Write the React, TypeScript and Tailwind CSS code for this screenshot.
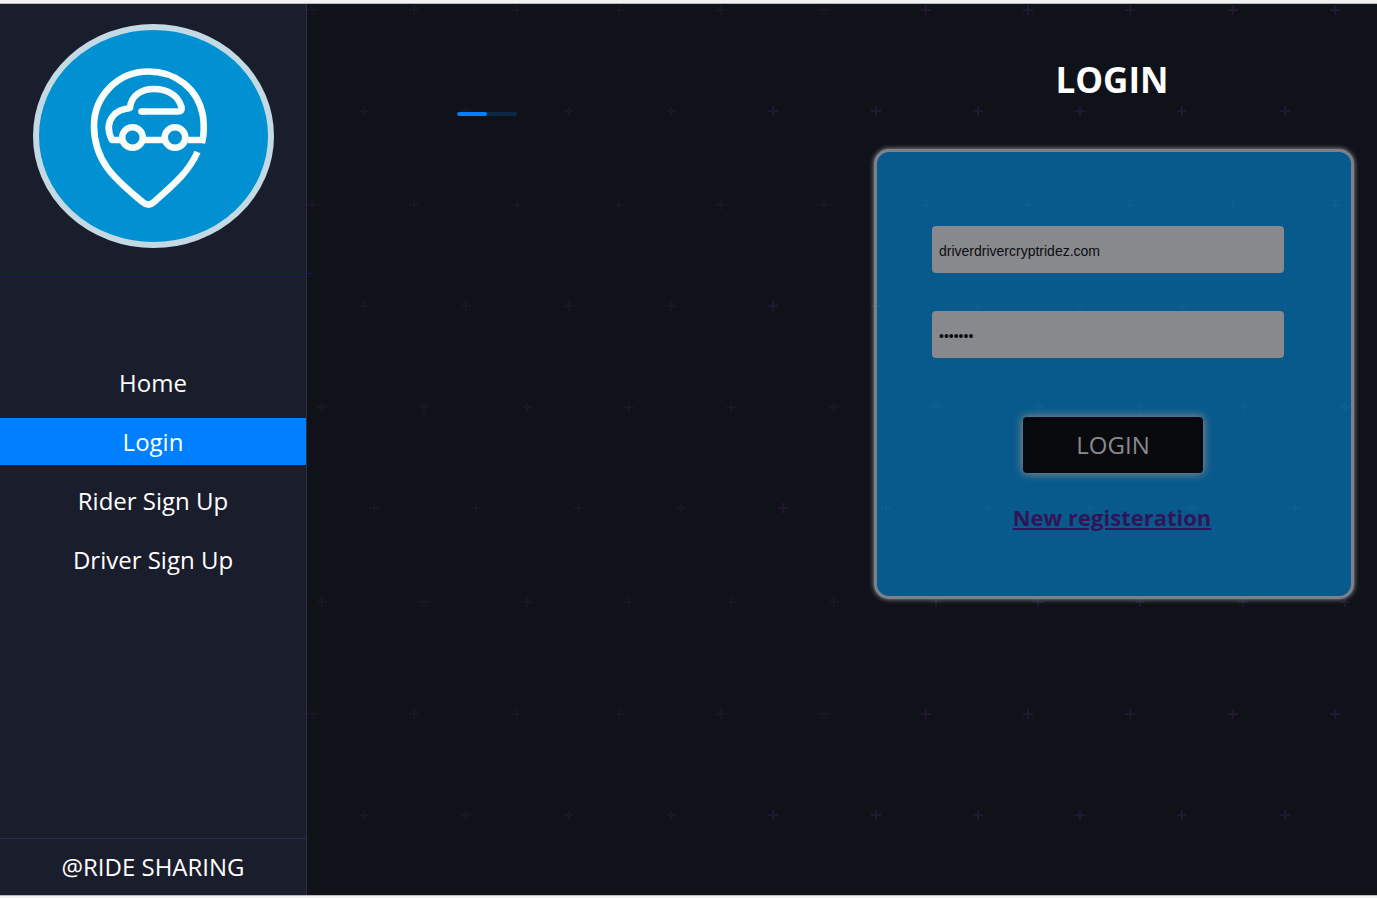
const PURPLE = "#20182e";
const NAVY = "#1a1c30";
const DIM_PURPLE = "#181622";
const DIM_NAVY = "#151824";

const rows = [
  { y: 9, start: 312 },
  { y: 110, start: 364 },
  { y: 204, start: 312 },
  { y: 305, start: 364 },
  { y: 406, start: 322 },
  { y: 507, start: 374 },
  { y: 601, start: 322 },
  { y: 713, start: 312 },
  { y: 814, start: 364 },
];

function Crosses() {
  return (
    <svg className="pointer-events-none absolute inset-0 h-full w-full" aria-hidden="true">
      {rows.map((row) =>
        Array.from({ length: 11 }, (_, i) => {
          const x = Math.round(row.start - 307 + i * 102.3);
          const y = row.y - 4;
          const staggered = row.start >= 350;
          const bright = i >= (staggered ? 4 : 6);
          const navy = i % 3 === (staggered ? 2 : 1);
          const color = bright ? (navy ? NAVY : PURPLE) : navy ? DIM_NAVY : DIM_PURPLE;
          return (
            <path
              key={`${row.y}-${i}`}
              d={`M${x - 5} ${y + 1}h10M${x} ${y - 4}v10`}
              stroke={color}
              strokeWidth="2"
            />
          );
        })
      )}
    </svg>
  );
}

function Logo() {
  return (
    <svg
      viewBox="0 0 241 224"
      className="h-56 w-[241px]"
      role="img"
      aria-label="Ride sharing logo"
      fill="none"
    >
      <ellipse cx="120.5" cy="112" rx="117.5" ry="109" fill="#0191d2" stroke="#c3d9e3" strokeWidth="6" />
      <g stroke="#f8fcfa" strokeWidth="6.6">
        <path d="M169 119C171 111 171 100 170 92C165 64 142 47.5 115.500 47.5C84 47.5 61 73 61 102C61 140 86 158 109.500 178Q115.500 183 121 178C140 161 155 149 164.500 128" />
        <path d="M87 116H79C74 106 75 98 80 92C84 87 89 85 97 84C98 71 109 65 121 65C134 65 145 71 148.500 83Q149.500 87.500 145 87.500H108.500" strokeLinejoin="round" />
        <path d="M108.500 87.500h2" strokeLinecap="round" />
        <path d="M112 116H130M155 116H171" />
        <circle cx="99.500" cy="113.500" r="10.300" />
        <circle cx="142" cy="113.500" r="10.300" />
      </g>
    </svg>
  );
}

const links = ["Home", "Login", "Rider Sign Up", "Driver Sign Up"];

function Sidebar() {
  return (
    <aside className="flex w-[307px] shrink-0 flex-col border-r border-[#292e49] bg-[#1a1d2b] text-2xl text-white">
      <div className="relative flex h-[270px] justify-center pt-5">
        <Logo />
        <div className="absolute bottom-0 left-0 z-10 h-px w-[313px] bg-[#101b5e]" />
      </div>
      <nav className="mt-[85px] flex flex-col gap-3">
        {links.map((label) => (
          <a
            key={label}
            href="#"
            className={
              label === "Login"
                ? "flex h-[47px] items-center justify-center bg-[#007fff]"
                : "flex h-[47px] items-center justify-center"
            }
          >
            {label}
          </a>
        ))}
      </nav>
      <footer className="mt-auto flex h-[57px] items-center justify-center border-t border-[#292e49]">
        @RIDE SHARING
      </footer>
    </aside>
  );
}

const field =
  "mr-3 h-[47px] w-[352px] rounded bg-[#88898c] px-[7px] pt-0.5 font-['Liberation_Sans',sans-serif] text-sm text-[#0b0c10] outline-none";

function LoginForm() {
  return (
    <section className="relative mr-[26px] flex w-[474px] flex-col items-center">
      <h1 className="mt-[50px] mr-1 text-[35px] leading-[52px] font-bold text-white">LOGIN</h1>
      <form
        onSubmit={(e) => e.preventDefault()}
        className="mt-[46px] flex w-full flex-col items-center rounded-xl bg-[#048ada]/60 pt-[74px] pb-[63px] shadow-[0_0_0_3px_#7c8087,0_0_5px_3px_#a0a0a0]"
      >
        <input
          type="text"
          aria-label="Email"
          defaultValue="driverdrivercryptridez.com"
          className={field}
        />
        <input
          type="password"
          aria-label="Password"
          defaultValue="1234567"
          className={`mt-[38px] ${field}`}
        />
        <button
          type="submit"
          className="mt-[59px] mr-0.5 h-14 w-[180px] rounded bg-[#090a0e] text-2xl text-[#88898c] shadow-[0_0_8px_1px_#8a8a8d]"
        >
          LOGIN
        </button>
        <a href="#" className="mt-7 mr-1 text-[22px] leading-8 font-bold text-[#321458] underline">
          New registeration
        </a>
      </form>
    </section>
  );
}

export default function App() {
  return (
    <div className="flex min-h-screen flex-col border-t-[3px] border-b-2 border-[#f2f2f2] bg-[#10121a] font-['Open_Sans',sans-serif]">
      <div className="flex flex-1 border-t border-b border-[#b9b9bb]">
        <Sidebar />
        <main className="relative flex flex-1 justify-between">
          <Crosses />
          <div className="relative mt-27 ml-[150px] h-1 w-15 overflow-hidden rounded-sm bg-[#0c2848]">
            <div className="h-full w-1/2 rounded-sm bg-[#007fff]" />
          </div>
          <LoginForm />
        </main>
      </div>
    </div>
  );
}
